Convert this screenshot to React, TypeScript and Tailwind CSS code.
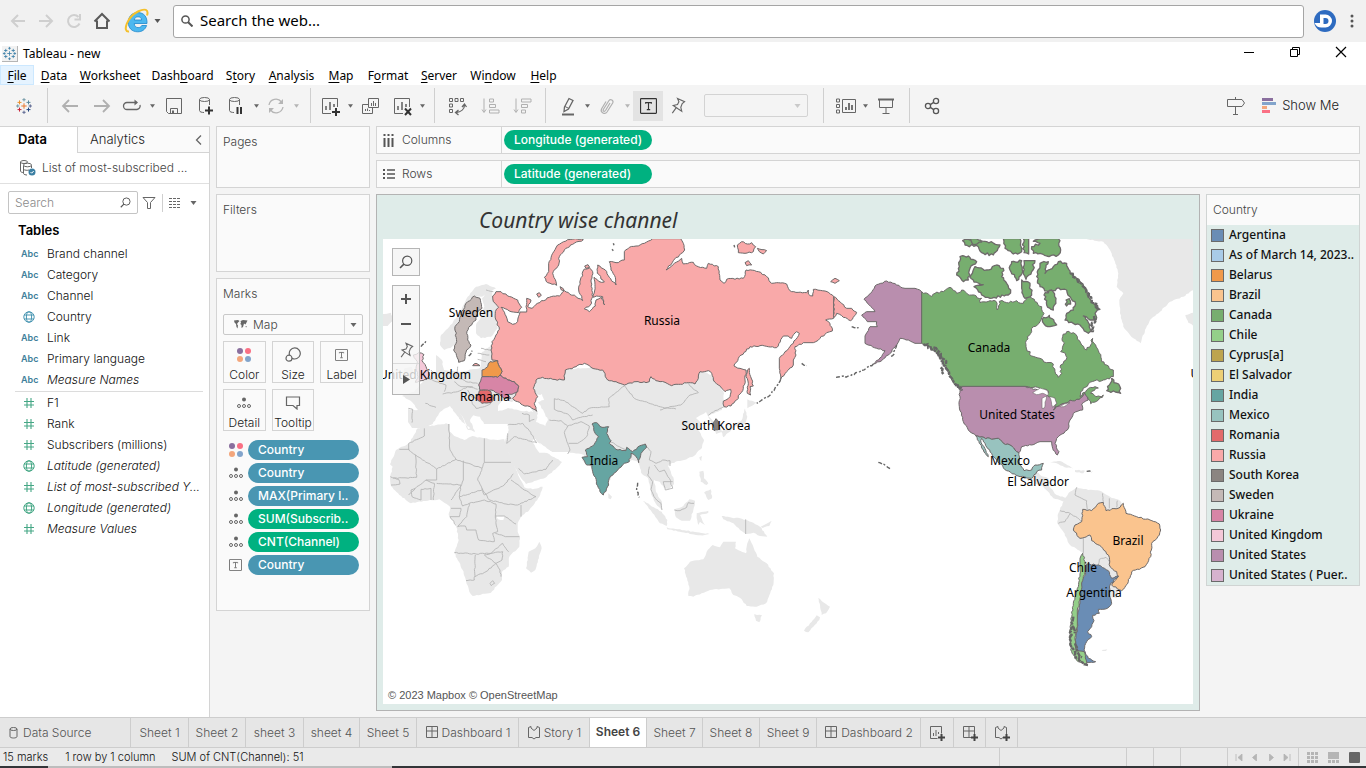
import React from "react";

const UI = "font-['Inter','Noto_Sans',sans-serif]";
const SYS = "font-['Noto_Sans','Open_Sans',sans-serif]";

/* ---------- map geometry ---------- */

type Frame = [number, number];
const EUROPE: Frame = [376, 190];
const SIBERIA: Frame = [660, 230];
const NORTH_AMERICA: Frame = [840, 230];
const AFRICA: Frame = [376, 400];
const PACIFIC: Frame = [640, 430];
const SOUTH_AMERICA: Frame = [1020, 470];

type Pt = [number, number];

/** Turns "x,y x,y" in third-of-a-pixel frame units into map units. */
function place(frame: Frame, list: string): Pt[] {
  return list
    .trim()
    .split(/\s+/)
    .map((p) => {
      const [x, y] = p.split(",").map(Number);
      return [frame[0] + x / 3, frame[1] + y / 3] as Pt;
    });
}

function noise(a: number, b: number) {
  const s = Math.sin(a * 12.9898 + b * 78.233) * 43758.5453;
  return s - Math.floor(s) - 0.5;
}

/** Breaks long edges into short ones with a small sideways offset, like a coast. */
function trace(pts: Pt[], rough: number, closed = true): string {
  const out: string[] = [];
  const n = pts.length;
  for (let i = 0; i < n; i++) {
    const a = pts[i];
    out.push(`${a[0].toFixed(2)},${a[1].toFixed(2)}`);
    if (!closed && i === n - 1) break;
    const b = pts[(i + 1) % n];
    const dx = b[0] - a[0];
    const dy = b[1] - a[1];
    const len = Math.hypot(dx, dy);
    if (rough === 0 || Math.abs(dx) < 0.01 || Math.abs(dy) < 0.01) continue;
    const swap = a[0] + a[1] > b[0] + b[1];
    const steps = Math.floor(len / 2);
    for (let k = 1; k < steps; k++) {
      const t = k / steps;
      const key = swap ? steps - k : k;
      const lo = swap ? b : a;
      const off = noise(lo[0] + key, lo[1] - key) * rough * (swap ? -1 : 1);
      const x = a[0] + dx * t - (dy / len) * off;
      const y = a[1] + dy * t + (dx / len) * off;
      out.push(`${x.toFixed(2)},${y.toFixed(2)}`);
    }
  }
  return `M${out.join("L")}${closed ? "Z" : ""}`;
}

const russia: Pt[] = [
  ...place(
    EUROPE,
    `830,146 805,160 780,168 760,172 745,185 745,210 720,218 700,215 705,240 718,262 720,285 700,262 688,240 665,225
     664,250 685,276 668,274 654,262 657,290 652,322 662,318 680,320 686,345 676,322 660,330 658,348 640,365 625,357 643,345 650,320 645,270 650,245 640,234 625,237 613,270
     608,300 620,332 600,320 565,302 550,318 520,322 480,343 468,355 455,350 465,330 452,325 450,350 452,366 432,366 425,395 410,403 395,395 390,378 375,352 405,365
     428,368 437,352 425,330 395,318 375,305 360,305 350,318 352,335 368,352 358,365 360,390 370,418 360,435 348,455
     345,480 348,510 365,512 370,530 378,545 372,555 395,570 415,575 428,590 425,605 410,625 440,645 462,650 482,664
     475,640 485,620 472,595 480,570 500,562 530,568 565,570 568,540 600,530 625,520 645,532 665,538 680,540 695,570
     720,575 745,585 780,575 810,578 820,575 825,560 840,572`
  ),
  ...place(
    SIBERIA,
    `0,455 15,457 35,467 55,463 85,458 105,462 115,445 120,425 145,422 155,430 160,450 185,475 195,485 212,478 210,500
     190,513 192,530 213,528 230,510 250,475 255,450 258,420 240,415 222,408 235,385 270,350 300,347 350,353 370,318
     385,318 395,325 410,305 418,310 400,340 375,365 358,385 358,415 362,448 380,425 400,405 400,390 408,375 405,350
     430,338 460,338 480,325 500,308 517,303 510,280 497,270 521,265 521,200 495,183 460,178 458,198 445,192 445,180 440,188
     395,185 385,175 380,162 350,158 335,160 320,140 295,125 258,120 250,145 200,148 192,160 180,150 175,110 145,100
     140,115 110,108 100,97 70,102 65,85 30,112 18,120 40,92 68,68 74,60 70,40 62,26`
  ),
];

interface Region {
  frame: Frame;
  color: string;
  shapes: string[];
}

const regions: Region[] = [
  {
    frame: EUROPE,
    color: "#f9a9a9",
    shapes: [
      "598,146 622,149 590,163 565,180 550,200 548,225 530,250 540,275 542,286 515,278 505,262 518,245 518,220 530,190 545,165 575,149",
      "290,527 300,520 312,527",
      "482,312 490,308 496,316 488,322",
      "552,290 562,296 564,302 556,300",
      "626,228 636,224 641,232 630,235",
    ],
  },
  {
    frame: SIBERIA,
    color: "#f9a9a9",
    shapes: [
      "521,200 540,215 560,235 575,235 590,247 572,272 550,262 530,250 522,262",
      "268,415 272,440 280,468 270,470 272,495 262,490 265,460 258,440 262,420",
      "232,45 245,35 262,42 275,38 287,50 280,65 255,70 235,68",
      "292,55 320,62 310,72 298,65",
      "255,98 265,92 275,105 260,107",
      "512,155 525,145 538,152 525,160",
    ],
  },
  { frame: EUROPE, color: "#f0994a", shapes: ["318,540 335,530 342,515 365,512 370,530 378,545 365,562 340,560 318,560"] },
  {
    frame: EUROPE,
    color: "#d785a6",
    shapes: ["318,560 340,560 365,562 372,555 395,570 415,575 428,590 425,605 395,615 405,625 385,625 365,610 345,600 335,602 310,598 308,585"],
  },
  { frame: EUROPE, color: "#e36a6b", shapes: ["310,602 335,600 345,605 352,625 345,638 318,640 300,625"] },
  {
    frame: EUROPE,
    color: "#c4b9b6",
    shapes: [
      "295,318 312,325 318,355 305,365 300,390 282,408 272,430 275,450 285,465 272,480 265,512 248,517 240,490 233,480 242,455 237,410 250,395 255,370 275,335",
    ],
  },
  { frame: EUROPE, color: "#f4c8d8", shapes: ["112,495 128,488 144,494 138,512 150,530 160,555 153,568 118,577 126,560 120,535 124,515"] },
  { frame: SIBERIA, color: "#86807d", shapes: ["160,578 168,566 176,576 179,596 162,602"] },
  {
    frame: AFRICA,
    color: "#66a5a2",
    shapes: [
      "648,72 662,68 678,82 698,80 692,100 705,122 700,130 720,148 750,152 752,142 770,155 790,138 808,132 812,142 795,160 788,188 780,170 765,160 760,185 745,190 725,210 700,235 698,255 682,285 672,275 650,215 648,195 632,195 618,172 635,170 628,150 650,138 668,110 655,95",
    ],
  },
  {
    frame: NORTH_AMERICA,
    color: "#b98eae",
    shapes: [
      "245,185 245,340 225,340 205,330 180,325 170,345 150,370 120,395 100,402 125,380 135,362 110,355 75,340 75,318 90,290 112,290 110,275 82,275 65,255 80,245 105,245 88,225 72,208 92,190 105,168 140,153 170,165 195,175 225,175",
      "358,474 365,469 555,469 580,478 622,488 645,505 650,520 640,540 660,525 690,510 718,508 735,487 745,510 725,522 728,540 700,550 690,570 682,600 650,625 645,640 657,665 652,675 638,655 635,635 600,635 575,645 545,650 537,668 525,660 510,645 490,640 475,625 455,628 408,618 385,600 370,575 358,530 360,500",
    ],
  },
  {
    frame: NORTH_AMERICA,
    color: "#77ae6f",
    shapes: [
      "245,185 275,200 285,190 310,185 330,172 350,190 365,180 395,195 425,205 420,218 450,212 468,214 472,240 478,214 500,218 530,212 550,220 560,205 570,190 585,215 605,230 612,250 600,275 580,290 575,305 562,320 558,350 575,378 600,385 620,398 640,402 645,425 655,442 665,430 662,405 678,390 676,370 662,365 670,345 668,320 680,305 700,308 712,320 725,345 740,360 752,345 758,325 762,340 775,362 785,395 800,405 820,420 820,440 790,450 765,452 745,462 722,485 720,500 740,480 765,470 775,474 752,490 768,500 790,495 770,514 752,521 745,508 735,490 718,508 690,510 660,525 640,540 650,520 645,505 625,500 622,480 600,475 565,470 555,469 365,469 355,474 335,450 325,425 310,400 300,380 285,365 270,350 245,340",
      "815,445 822,458 836,462 842,490 826,486 800,482 808,465",
      "360,80 385,78 410,95 400,104 390,115 385,150 370,155 350,135 358,110",
      "405,110 440,120 470,105 490,115 485,140 500,160 512,180 505,195 450,205 425,195 402,170 430,164 402,156 390,142",
      "515,95 545,92 548,125 530,152 510,120",
      "552,92 585,92 575,125 558,148 550,125",
      "600,100 625,95 615,130 640,110 655,95 680,100 690,130 710,145 740,180 745,200 780,238 765,250 768,270 750,270 730,258 760,305 745,310 720,285 700,280 675,270 680,250 700,240 705,215 690,200 680,180 650,175 625,190 600,170 590,140",
      "368,32 385,28 440,35 480,45 460,75 430,70 415,50 375,45",
      "385,26 410,26 425,36 405,44",
      "490,26 540,26 545,65 520,72 495,55",
      "550,26 566,26 566,72 552,68",
      "575,50 600,40 580,34 600,26 655,26 662,60 655,75 620,78 580,70",
      "612,195 635,180 648,205 640,240 620,225",
      "610,262 628,256 650,285 630,290 612,282",
      "545,150 570,160 575,195 555,205 545,175",
      "678,210 688,206 692,222 680,228",
    ],
  },
  {
    frame: NORTH_AMERICA,
    color: "#98c3bf",
    shapes: [
      "408,618 455,628 475,625 490,640 510,645 525,660 537,668 538,700 552,722 575,720 585,705 610,700 605,720 590,725 575,745 540,740 500,722 470,690 455,670 425,625 422,632 445,680 430,660 418,640",
    ],
  },
  {
    frame: SOUTH_AMERICA,
    color: "#fac48e",
    shapes: [
      "310,100 318,130 350,140 390,150 418,162 422,180 418,195 395,220 392,260 375,290 335,305 325,335 305,362 275,345 295,320 290,305 270,290 268,262 248,235 215,212 210,195 180,205 160,180 165,165 185,155 188,118 215,122 235,100 250,97 258,122 300,112",
    ],
  },
  {
    frame: SOUTH_AMERICA,
    color: "#6a8db5",
    shapes: [
      "200,282 235,285 265,302 275,325 295,318 270,345 268,375 275,400 262,415 235,418 238,430 218,436 222,452 215,470 203,485 215,500 200,515 192,540 205,565 227,575 200,577 190,560 168,535 165,510 172,480 170,440 180,400 180,350 192,320 200,300",
    ],
  },
  {
    frame: SOUTH_AMERICA,
    color: "#94cf89",
    shapes: [
      "188,250 195,275 195,300 185,345 180,390 172,420 172,470 165,510 168,540 192,545 200,583 175,575 155,545 148,500 155,440 160,400 175,350 180,300 180,265",
    ],
  },
];

const land: [Frame, string][] = [
  [
    [0, 0],
    `1446,1056 1500,1020 1680,1110 1860,1095 2100,1110 2145,1130 2172,1180 2166,1230 2124,1248 2142,1266 2154,1272 2166,1296 2148,1302
     2118,1236 2088,1254 2106,1272 2094,1290 2112,1320 2106,1344 2082,1368 2052,1380 2016,1389 2004,1398 2020,1432 2022,1452 2004,1470
     1992,1464 1980,1446 1962,1440 1968,1476 1986,1506 1986,1530 1968,1512 1956,1488 1950,1464 1944,1434 1926,1422 1914,1386
     1896,1380 1878,1386 1836,1428 1812,1482 1782,1428 1770,1398 1746,1380 1752,1365 1704,1356 1656,1356 1632,1344 1602,1314 1596,1326
     1618,1358 1640,1358 1686,1386 1674,1400 1635,1434 1578,1452 1563,1434 1542,1398 1524,1356 1512,1330 1524,1296 1527,1272 1488,1272
     1452,1272 1440,1250 1420,1246 1410,1260 1425,1296 1408,1290 1380,1238 1404,1290 1410,1284 1386,1266 1350,1218 1338,1224 1320,1236 1298,1272
     1272,1284 1236,1284 1224,1266 1224,1227 1254,1230 1236,1206 1206,1188 1242,1176 1272,1140 1308,1116 1308,1065 1326,1080 1332,1110
     1380,1116 1440,1104`,
  ],
  [EUROPE, "205,480 192,465 195,435 220,410 250,370 275,320 300,290 330,282 360,295 340,305 318,320 295,318 270,340 250,395 237,410 240,460 228,470"],
  [EUROPE, "318,325 345,295 352,330 365,355 358,370 365,415 345,440 315,445 300,430 300,405 318,375 325,350"],
  [EUROPE, "85,535 108,530 112,550 100,566 82,562"],
  [EUROPE, "20,372 45,368 52,388 35,408 20,408"],
  [
    AFRICA,
    "125,85 150,80 210,70 222,72 222,95 235,108 265,120 290,108 325,115 365,120 385,118 390,140 405,170 425,220 445,262 470,268 500,260 490,290 460,330 435,350 425,370 425,395 432,410 430,440 400,470 398,500 378,515 378,540 345,578 290,588 280,575 260,510 235,458 248,420 240,375 218,345 222,320 190,298 155,302 105,310 70,285 45,258 42,235 50,200 42,193 60,150 100,130",
  ],
  [AFRICA, "490,425 497,445 478,510 465,518 450,505 458,455 478,445"],
  [AFRICA, "697,280 708,290 704,298 697,295"],
  [PACIFIC, "8,212 30,225 65,245 82,270 80,288 60,280 35,245"],
  [PACIFIC, "80,292 120,298 165,306 215,312 180,316 120,305 82,298"],
  [PACIFIC, "103,238 130,228 148,208 165,212 160,240 150,272 125,272 108,262"],
  [PACIFIC, "170,250 205,242 205,248 180,255 195,285 180,275 175,285 170,265"],
  [PACIFIC, "178,125 190,122 192,145 205,160 200,165 182,155"],
  [PACIFIC, "192,188 212,178 216,205 205,210"],
  [PACIFIC, "178,82 186,78 184,94"],
  [PACIFIC, "245,258 270,262 300,265 340,278 360,290 382,320 360,318 340,308 318,312 300,300 280,280 250,268"],
  [PACIFIC, "362,290 385,278 395,272 388,288 368,294"],
  [
    PACIFIC,
    "328,325 340,350 352,380 380,400 402,430 400,465 378,520 350,530 320,528 305,508 290,498 280,495 268,475 210,480 160,500 145,498 148,470 132,415 150,395 190,388 200,365 218,345 240,352 250,335 288,335 285,355 318,370 322,340",
  ],
  [PACIFIC, "343,552 366,556 358,577 348,572"],
  [PACIFIC, "535,503 552,518 570,530 558,550 545,555 542,540"],
  [PACIFIC, "530,556 540,562 538,570 520,590 505,607 492,602 510,580"],
  [SIBERIA, "262,508 290,518 275,528 262,535"],
  [SIBERIA, "255,535 262,560 255,582 225,590 190,622 184,605 215,590 245,570"],
  [NORTH_AMERICA, "575,745 590,725 600,735 625,745 628,770 650,795 690,808 672,815 640,805 610,770 585,760"],
  [NORTH_AMERICA, "630,696 660,693 700,715 680,713 650,700"],
  [NORTH_AMERICA, "705,720 735,722 730,730 705,726"],
  [
    NORTH_AMERICA,
    "725,26 1060,26 1060,180 1030,200 990,215 960,245 930,270 915,300 902,340 880,325 850,290 840,250 838,210 850,190 830,170 835,130 825,95 810,60 790,35",
  ],
  [NORTH_AMERICA, "1036,255 1060,248 1060,288 1045,278"],
  [SOUTH_AMERICA, "130,95 150,65 170,52 205,60 240,62 270,80 300,92 320,130 300,300 290,385 268,380 200,290 190,250 150,225 130,185 112,160 115,130"],
  [SOUTH_AMERICA, "245,540 262,538 258,543 248,543"],
];

const water: [Frame, string][] = [
  [[0, 0], "1494,1218 1512,1196 1536,1206 1560,1196 1590,1220 1600,1236 1560,1232 1524,1224 1494,1234"],
  [[0, 0], "1596,1188 1626,1182 1632,1200 1614,1206 1632,1236 1644,1260 1636,1278 1608,1266 1614,1240"],
  [AFRICA, "488,128 508,140 536,162 528,166 505,156"],
  [AFRICA, "362,346 384,348 382,360 366,358"],
  [NORTH_AMERICA, "578,488 600,474 622,482 625,496 608,490 590,494"],
  [NORTH_AMERICA, "606,505 620,498 612,535 606,535"],
  [NORTH_AMERICA, "628,500 645,505 650,520 638,532 634,515"],
  [NORTH_AMERICA, "655,528 690,518 672,530"],
];

const borders: [Frame, string][] = [
  [AFRICA, "145,85 145,108 98,130 98,150 182,207 240,178 222,150 218,72"],
  [AFRICA, "325,115 325,187 405,187"],
  [AFRICA, "325,187 318,205 240,178"],
  [AFRICA, "118,165 122,232 52,235"],
  [AFRICA, "70,148 100,148"],
  [AFRICA, "182,207 182,240 150,240 118,265 98,285"],
  [AFRICA, "262,182 262,240 250,265 225,300"],
  [AFRICA, "318,205 305,240 318,265 325,285 385,255 412,222"],
  [AFRICA, "182,250 255,255 250,290 318,270"],
  [AFRICA, "318,265 340,300 390,312 425,315 480,290 445,270 405,240"],
  [AFRICA, "435,315 435,350"],
  [AFRICA, "250,290 260,318 280,310 325,300 360,312 358,348 385,348 420,372"],
  [AFRICA, "280,310 272,350 245,380 268,378 272,390 300,390 308,420 355,425 350,400 365,395 358,348"],
  [AFRICA, "240,376 222,350 250,350 255,325 225,325"],
  [AFRICA, "358,400 388,410 430,410"],
  [AFRICA, "235,458 300,462 345,460 380,430 398,455"],
  [AFRICA, "298,465 295,540 270,542"],
  [AFRICA, "297,530 330,515 360,490 378,480 380,455 345,460 325,465 360,490"],
  [AFRICA, "360,490 372,510 375,530"],
  [AFRICA, "342,550 350,542 356,550 346,557 342,550"],
  [AFRICA, "118,265 105,270 108,290 135,300 135,268 165,265 165,300"],
  [AFRICA, "172,300 175,250 150,240"],
  [AFRICA, "43,230 68,238 72,252 45,255"],
  [AFRICA, "395,75 440,70 460,92 482,128 415,110 392,130 395,100"],
  [AFRICA, "445,222 510,208 530,180"],
  [AFRICA, "445,222 428,205"],
  [AFRICA, "438,40 460,45 460,65 475,58"],
  [AFRICA, "520,60 555,62 575,78 565,98 575,130 582,150 575,162"],
  [AFRICA, "575,78 615,65 640,78 632,110 605,130 578,130"],
  [AFRICA, "535,28 535,-4 565,2 590,20 620,40 640,25 700,20 698,-5 745,-42"],
  [AFRICA, "535,28 575,42 590,60 620,50 650,45"],
  [AFRICA, "700,122 730,140 752,150"],
  [AFRICA, "745,-42 775,-5 860,22 900,27"],
  [AFRICA, "808,132 825,155 820,180 840,190 860,180 882,182 882,198"],
  [AFRICA, "820,200 815,225 830,245 825,268 838,295 855,310 858,330"],
  [AFRICA, "835,195 850,215 865,210 880,235 890,265 868,270 862,245 890,245"],
  [AFRICA, "97,25 110,28 108,68"],
  [AFRICA, "148,10 180,22"],
  [EUROPE, "155,565 180,575 210,585 205,605"],
  [EUROPE, "165,540 180,555 185,570"],
  [EUROPE, "245,530 240,560 270,575 305,580"],
  [EUROPE, "200,612 245,605 275,590 305,598"],
  [EUROPE, "235,575 255,590 290,590"],
  [EUROPE, "275,600 285,620 305,625"],
  [EUROPE, "280,625 300,655 325,650 345,640"],
  [EUROPE, "305,490 340,495"],
  [EUROPE, "305,508 330,515"],
  [EUROPE, "315,475 345,480"],
  [EUROPE, "330,300 352,305"],
  [SIBERIA, "0,540 30,530 62,525 90,495 115,488 90,468 85,460"],
  [SIBERIA, "192,530 165,542 145,556"],
  [PACIFIC, "103,240 120,242 140,232 145,218 162,220"],
  [PACIFIC, "317,268 317,312"],
  [SOUTH_AMERICA, "170,52 165,75 185,85 200,92 202,118"],
  [SOUTH_AMERICA, "248,70 250,95"],
  [SOUTH_AMERICA, "268,85 268,115"],
  [SOUTH_AMERICA, "292,92 290,112"],
  [SOUTH_AMERICA, "120,122 150,130 188,155"],
  [SOUTH_AMERICA, "115,160 135,155 150,132"],
  [SOUTH_AMERICA, "190,205 190,250"],
  [SOUTH_AMERICA, "235,285 238,268 258,262 268,275"],
];

const darkIslands: [Frame, string][] = [
  [SIBERIA, "362,448 345,475 325,500 290,520"],
  [NORTH_AMERICA, "100,402 60,425 30,438 -12,442"],
  [NORTH_AMERICA, "115,697 132,703 150,716"],
  [NORTH_AMERICA, "170,345 162,372 152,380"],
  [NORTH_AMERICA, "740,724 756,726"],
  [NORTH_AMERICA, "35,290 56,293"],
  [SIBERIA, "425,400 440,407"],
  [SIBERIA, "222,45 224,52"],
  [AFRICA, "785,248 782,265 790,292"],
  [EUROPE, "135,470 150,452"],
  [EUROPE, "278,498 288,482"],
  [EUROPE, "712,160 714,166"],
  [EUROPE, "708,178 712,182"],
];

const thickCoasts: [Frame, string][] = [
  [NORTH_AMERICA, "250,342 272,352 290,368 304,392 318,415 330,440 345,462 362,478"],
  [NORTH_AMERICA, "280,352 298,366 312,388 318,402"],
  [NORTH_AMERICA, "302,412 310,432"],
  [NORTH_AMERICA, "345,465 366,482"],
  [NORTH_AMERICA, "690,130 712,148 738,178 746,200 778,238"],
  [NORTH_AMERICA, "762,258 768,272 754,286 760,305"],
  [SOUTH_AMERICA, "160,440 158,470 151,500 154,530 165,555 182,575 204,585"],
  [SOUTH_AMERICA, "160,470 164,490"],
  [SOUTH_AMERICA, "165,520 172,545 186,562"],
];

const labels: [string, number, number][] = [
  ["Sweden", 471, 317],
  ["Russia", 662, 325],
  ["United Kingdom", 425, 379],
  ["Romania", 485, 401],
  ["South Korea", 716, 430],
  ["India", 604, 465],
  ["Canada", 989, 352],
  ["United States", 1017, 419],
  ["Mexico", 1010, 465],
  ["El Salvador", 1038, 486],
  ["Brazil", 1128, 545],
  ["Chile", 1083, 572],
  ["Argentina", 1094, 597],
];

function WorldMap() {
  return (
    <svg viewBox="383 239 810 465" preserveAspectRatio="xMidYMid slice" className="block h-full w-full bg-white" role="img" aria-label="Country wise channel map">
      <g fill="#e8e8e8">
        {land.map(([f, s], i) => (
          <path key={i} d={trace(place(f, s), 1)} />
        ))}
      </g>
      <g fill="#fff">
        {water.slice(0, 4).map(([f, s], i) => (
          <path key={i} d={trace(place(f, s), 1)} />
        ))}
      </g>
      <g fill="none" stroke="#b5b5b5" strokeWidth="0.9">
        {borders.map(([f, s], i) => (
          <path key={i} d={trace(place(f, s), 1, false)} />
        ))}
      </g>
      <g stroke="#6e6a6a" strokeWidth="1" strokeLinejoin="round">
        <path d={trace(russia, 1.5)} fill="#f9a9a9" />
        {regions.map((r) =>
          r.shapes.map((s, i) => (
            <path
              key={r.color + i}
              d={trace(place(r.frame, s), r.color === "#77ae6f" ? 2.6 : 1.4)}
              fill={r.color}
              strokeWidth={r.color === "#77ae6f" && i > 0 ? 1.3 : 1}
            />
          ))
        )}
      </g>
      <g fill="#fff" stroke="#6e6a6a" strokeWidth="0.6">
        {water.slice(4).map(([f, s], i) => (
          <path key={i} d={trace(place(f, s), 1)} />
        ))}
      </g>
      <g fill="none" stroke="#666" strokeWidth="1.4" strokeDasharray="4 1.5 2 2">
        {darkIslands.map(([f, s], i) => (
          <path key={i} d={trace(place(f, s), 1.6, false)} />
        ))}
      </g>
      <g fill="none" stroke="#666" strokeWidth="2.4" strokeDasharray="5 0.6 3 1">
        {thickCoasts.map(([f, s], i) => (
          <path key={i} d={trace(place(f, s), 3, false)} />
        ))}
      </g>
      <g className="fill-black text-[12px] font-normal" textAnchor="middle" fontFamily="'Noto Sans', sans-serif">
        {labels.map(([t, x, y]) => (
          <text key={t} x={x} y={y}>
            {t}
          </text>
        ))}
        <text x="1195" y="378">
          U
        </text>
      </g>
    </svg>
  );
}

/* ---------- icons ---------- */

function Ico({ w = 20, h = 20, c = "#666", sw = 1, children }: { w?: number; h?: number; c?: string; sw?: number; children: React.ReactNode }) {
  return (
    <svg width={w} height={h} viewBox={`0 0 ${w} ${h}`} fill="none" stroke={c} strokeWidth={sw} className="shrink-0" aria-hidden="true">
      {children}
    </svg>
  );
}

function Caret({ c = "#666", w = 6 }: { c?: string; w?: number }) {
  return (
    <svg width={w} height="4" viewBox="0 0 6 4" className="shrink-0" aria-hidden="true">
      <path d="M0 0H6L3 4Z" fill={c} />
    </svg>
  );
}

const tableauPluses: [number, number, number, string, string][] = [
  [10, 10, 3, "#e8762d", "#3c7fa8"],
  [5, 6, 2.2, "#eb912c", "#3c7fa8"],
  [15, 6, 2.2, "#59879b", "#3c7fa8"],
  [5, 14, 2.2, "#c72037", "#3c7fa8"],
  [15, 14, 2.2, "#1f447e", "#3c7fa8"],
  [10, 3, 1.8, "#7199a6", "#3c7fa8"],
  [10, 17, 1.8, "#5b6591", "#3c7fa8"],
  [3, 10, 1.8, "#7199a6", "#3c7fa8"],
  [17, 10, 1.8, "#5b6591", "#3c7fa8"],
];

function TableauLogo({ mono = false, size = 20 }: { mono?: boolean; size?: number }) {
  return (
    <svg width={size} height={size} viewBox="0 0 20 20" aria-hidden="true" className="shrink-0">
      {tableauPluses.map(([x, y, r, c, m], i) => (
        <path key={i} d={`M${x - r} ${y}H${x + r}M${x} ${y - r}V${y + r}`} stroke={mono ? m : c} strokeWidth="1.1" />
      ))}
    </svg>
  );
}

const Arrow = ({ flip = false, c = "#b0b0b0" }: { flip?: boolean; c?: string }) => (
  <Ico c={c} sw={1.8}>
    <path d={flip ? "M2 10H17M11 4L17 10L11 16" : "M18 10H3M9 4L3 10L9 16"} />
  </Ico>
);

const Database = ({ pause = false }: { pause?: boolean }) => (
  <Ico>
    <ellipse cx="8.500" cy="3.500" rx="5" ry="2" />
    <path d="M3.500 3.500V14.500C3.500 16 6 16.500 8 16.500M13.500 3.500V9" />
    {pause ? <path d="M11.500 11V18M15 11V18" stroke="#333" strokeWidth="2" /> : <path d="M9 14.500H17M13 10.500V18.500" stroke="#333" strokeWidth="2" />}
  </Ico>
);

const SheetIcon = ({ mark }: { mark: "plus" | "cross" }) => (
  <Ico>
    <path d="M11 17.500H2.500V2.500H17.500V11" />
    <path d="M6 10V14M10 6V14M14 8V11" strokeWidth="1.600" />
    {mark === "plus" ? <path d="M12 16H20M16 12V20" stroke="#333" strokeWidth="2" /> : <path d="M13 12.500L19 19M19 12.500L13 19" stroke="#333" strokeWidth="2" />}
  </Ico>
);

const TextIcon = ({ size = 15, c = "#666" }: { size?: number; c?: string }) => (
  <svg width={size} height={size - 1} viewBox="0 0 15 14" fill="none" stroke={c} aria-hidden="true" className="shrink-0">
    <rect x="0.500" y="0.500" width="14" height="13" rx="0.500" />
    <path d="M5 5V4H10V5M7.500 4V10M6 10.200H9" />
  </svg>
);

const Pin = ({ s = 18 }: { s?: number }) => (
  <svg width={s} height={s} viewBox="0 0 18 18" fill="none" stroke="#666" strokeWidth="1.200" aria-hidden="true">
    <path d="M9 1.500L16.500 5L14 7L12.500 11L13.500 15L9.500 12.500L4.500 9L9 8L10.500 5ZM7.500 11.500L3.500 17" />
  </svg>
);

const Detail = () => (
  <svg width="16" height="12" viewBox="0 0 16 12" fill="none" stroke="#666" aria-hidden="true">
    <circle cx="8" cy="2.500" r="2" fill="#666" stroke="none" />
    <circle cx="3" cy="9" r="1.500" />
    <circle cx="8" cy="9" r="1.500" />
    <circle cx="13" cy="9" r="1.500" />
  </svg>
);

const ColorDots = () => (
  <svg width="16" height="16" viewBox="0 0 16 16" aria-hidden="true">
    <circle cx="4" cy="4" r="3" fill="#8a6f9e" />
    <circle cx="12" cy="4" r="3" fill="#fa7084" />
    <circle cx="4" cy="12" r="3" fill="#f3a67c" />
    <circle cx="12" cy="12" r="3" fill="#82a4cb" />
  </svg>
);

const Globe = ({ c }: { c: string }) => (
  <svg width="12" height="12" viewBox="0 0 12 12" fill="none" stroke={c} aria-hidden="true">
    <circle cx="6" cy="6" r="5.200" />
    <ellipse cx="6" cy="6" rx="2.600" ry="5.200" />
    <path d="M1 4H11M1 8H11" />
  </svg>
);

const Hash = () => (
  <svg width="12" height="12" viewBox="0 0 12 12" fill="none" stroke="#45a785" strokeWidth="1.100" aria-hidden="true">
    <path d="M4 1V11M8 1V11M1 4.500H11M1 8H11" />
  </svg>
);

const Magnifier = ({ s = 14, c = "#555" }: { s?: number; c?: string }) => (
  <svg width={s} height={s} viewBox="0 0 14 14" fill="none" stroke={c} strokeWidth="1.200" aria-hidden="true" className="shrink-0">
    <circle cx="8.200" cy="5.800" r="4.600" />
    <path d="M4.900 9.100L1 13" strokeWidth="1.500" />
  </svg>
);

const DashIcon = ({ plus = false }: { plus?: boolean }) => (
  <Ico w={16} h={16}>
    <path d="M1.500 1.500H12.500V12.500H1.500ZM7 1.500V12.500M1.500 6H12.500" />
    {plus && <path d="M9 12.500H16M12.500 9V16" stroke="#444" strokeWidth="2" />}
  </Ico>
);

const StoryIcon = ({ plus = false }: { plus?: boolean }) => (
  <Ico w={16} h={16}>
    <path d="M7 5.500L4 3V1.500L1.500 2.500V12.500H5L7 14L9 12.500H12.500V2.500L10 1.500V3L7 5.500" />
    {plus && <path d="M9 12.500H16M12.500 9V16" stroke="#444" strokeWidth="2" />}
  </Ico>
);

function Tool({ w, label, children, active = false }: { w: string; label: string; children: React.ReactNode; active?: boolean }) {
  return (
    <button type="button" aria-label={label} className={`flex h-[30px] shrink-0 items-center justify-center ${w} ${active ? "bg-[#e3e3e3]" : ""}`}>
      {children}
    </button>
  );
}

const Sep = () => <span className="h-[35px] w-px shrink-0 bg-[#cfcfcf]" />;

/* ---------- page parts ---------- */

function BrowserBar() {
  return (
    <div className="flex h-[42px] shrink-0 items-center bg-[#f1f1f1] pr-3 pl-2">
      <button type="button" aria-label="Back" className="flex w-5 justify-center">
        <Ico w={18} h={18} c="#cfcfcf" sw={2}>
          <path d="M16 9H3M9 3L3 9L9 15" />
        </Ico>
      </button>
      <button type="button" aria-label="Forward" className="ml-2 flex w-5 justify-center">
        <Ico w={18} h={18} c="#cfcfcf" sw={2}>
          <path d="M2 9H15M9 3L15 9L9 15" />
        </Ico>
      </button>
      <button type="button" aria-label="Reload" className="ml-2 flex w-5 justify-center">
        <Ico w={18} h={18} c="#cfcfcf" sw={2}>
          <path d="M14.500 11.500A6 6 0 1 1 13.500 5M15 2V7.500H9.500" />
        </Ico>
      </button>
      <button type="button" aria-label="Home" className="ml-2 flex w-5 justify-center">
        <Ico w={18} h={18} c="#5a5a5a" sw={2}>
          <path d="M4 8.500V16H14V8.500M1.500 9.500L9 2L16.500 9.500" />
        </Ico>
      </button>
      <button type="button" aria-label="Search engine" className="ml-3 flex h-[30px] w-[37px] items-center justify-center gap-1">
        <svg width="26" height="26" viewBox="0 0 26 26" fill="none" aria-hidden="true" className="shrink-0">
          <path
            fillRule="evenodd"
            d="M23 15.500H10.200C10.400 18.500 12.200 19.600 14.200 19.600C16 19.600 17.200 18.800 17.800 17.500H22.600C21.300 21.600 18 23.800 13.800 23.800C7.800 23.800 4.300 20 4.300 14.300C4.300 8.600 8 4.600 13.800 4.600C20 4.600 23.300 8.800 23 15.500ZM10.300 12H17.600C17.400 9.800 16 8.800 14 8.800C12 8.800 10.600 9.900 10.300 12Z"
            fill="#4db8ef"
            stroke="#1d87cb"
            strokeWidth="0.800"
          />
          <path d="M5 23.500C-2 24.500 3 9 14 3.500C21 0 25 1.500 23 7.500" stroke="#f4c02c" strokeWidth="2" />
        </svg>
        <Caret c="#555" w={7} />
      </button>
      <div className="ml-3 flex h-[33px] min-w-0 flex-1 items-center gap-[7px] rounded-[3px] border border-[#a5a5a5] bg-white px-[7px]">
        <svg width="12" height="12" viewBox="0 0 12 12" fill="none" stroke="#555" strokeWidth="1.500" aria-hidden="true" className="shrink-0">
          <circle cx="4.500" cy="4.500" r="3.600" />
          <path d="M7.200 7.200L11.500 11.500" strokeWidth="2" />
        </svg>
        <input
          aria-label="Search the web"
          placeholder="Search the web..."
          className={`h-full min-w-0 flex-1 bg-transparent pb-[2px] text-[15px] font-normal text-black outline-none placeholder:text-black ${SYS}`}
        />
      </div>
      <button type="button" aria-label="Profile" className="ml-[10px]">
        <svg width="22" height="22" viewBox="0 0 22 22" aria-hidden="true">
          <circle cx="11" cy="11" r="11" fill="#2e6bc0" />
          <path d="M6 4.500H11.500A6.500 6.500 0 0 1 11.500 17.500H7.500C4 17.500 2 16 0.500 13H6Z" fill="#fff" />
          <path d="M9.500 8H11.500A3 3 0 0 1 11.500 14H9.500Z" fill="#2e6bc0" />
        </svg>
      </button>
      <button type="button" aria-label="More" className="ml-[14px]">
        <svg width="4" height="14" viewBox="0 0 4 14" fill="#555" aria-hidden="true">
          <circle cx="2" cy="2" r="1.500" />
          <circle cx="2" cy="7" r="1.500" />
          <circle cx="2" cy="12" r="1.500" />
        </svg>
      </button>
    </div>
  );
}

function TitleBar() {
  return (
    <div className={`flex h-[23px] shrink-0 items-center bg-white pr-[19px] pl-[2px] text-[12px] font-normal text-black ${SYS}`}>
      <span className="flex h-4 w-4 items-center border-r border-b border-[#b5b5b5] bg-[#f2f2f2]">
        <TableauLogo mono size={15} />
      </span>
      <h1 className="ml-[5px] flex-1">Tableau - new</h1>
      <div className="flex gap-[34px] pb-1">
        <button type="button" aria-label="Minimize">
          <Ico w={12} h={12} c="#000">
            <path d="M1 6.500H11" />
          </Ico>
        </button>
        <button type="button" aria-label="Restore">
          <Ico w={12} h={12} c="#000">
            <path d="M1.500 3.500H8.500V10.500H1.500ZM3.500 3.500V1.500H10.500V8.500H8.500" />
          </Ico>
        </button>
        <button type="button" aria-label="Close">
          <Ico w={12} h={12} c="#000">
            <path d="M1 1L11 11M11 1L1 11" strokeWidth="1.200" />
          </Ico>
        </button>
      </div>
    </div>
  );
}

const menus: [string, string, string, string][] = [
  ["", "F", "ile", "w-[34px]"],
  ["", "D", "ata", "w-[40px]"],
  ["", "W", "orksheet", "w-[72px]"],
  ["Dash", "b", "oard", "w-[73px]"],
  ["S", "t", "ory", "w-[43px]"],
  ["", "A", "nalysis", "w-[59px]"],
  ["", "M", "ap", "w-[40px]"],
  ["F", "o", "rmat", "w-[54px]"],
  ["", "S", "erver", "w-[48px]"],
  ["Wi", "n", "dow", "w-[60px]"],
  ["", "H", "elp", "w-[41px]"],
];

function MenuBar() {
  return (
    <nav className={`flex h-[20px] shrink-0 bg-white text-[12px] font-normal text-black ${SYS}`}>
      {menus.map(([a, u, b, w], i) => (
        <button key={i} type="button" className={`flex items-center justify-center pt-[2px] whitespace-pre ${w} ${i === 0 ? "border border-[#cce8ff] bg-[#e5f3ff]" : ""}`}>
          <span>
            {a}
            <span className="underline underline-offset-2">{u}</span>
            {b}
          </span>
        </button>
      ))}
    </nav>
  );
}

function Toolbar() {
  return (
    <div className="flex h-[41px] shrink-0 items-center bg-[#f4f4f4]">
      <Tool w="w-[47px]" label="Start page">
        <TableauLogo size={18} />
      </Tool>
      <Sep />
      <Tool w="ml-1.5 w-8" label="Undo">
        <Arrow />
      </Tool>
      <Tool w="w-8" label="Redo">
        <Arrow flip />
      </Tool>
      <Tool w="w-7" label="Replay">
        <Ico sw={1.300}>
          <path d="M15 6.500H5A3.500 3.500 0 0 0 5 13.500H15A3.500 3.500 0 0 0 18 9" />
          <path d="M12.500 3.500L16 6.500L12.500 9.500Z" fill="#666" stroke="none" />
        </Ico>
      </Tool>
      <Tool w="w-3" label="Replay options">
        <Caret w={5} />
      </Tool>
      <Tool w="w-8" label="Save">
        <Ico>
          <path d="M2.500 2.500H17.500V17.500H4.500L2.500 15.500ZM6.500 17.500V12.500H13.500V17.500" />
          <path d="M9 14.500V17" strokeWidth="2" />
        </Ico>
      </Tool>
      <Tool w="w-[31px]" label="New data source">
        <Database />
      </Tool>
      <Tool w="w-[30px]" label="Pause auto updates">
        <Database pause />
      </Tool>
      <Tool w="w-[11px]" label="Pause options">
        <Caret w={5} />
      </Tool>
      <Tool w="w-7" label="Refresh">
        <Ico c="#b5b5b5" sw={1.300}>
          <path d="M3 9A7 7 0 0 1 15.500 6M17 11A7 7 0 0 1 4.500 14" />
          <path d="M17 3V8H12ZM3 17V12H8Z" fill="#b5b5b5" stroke="none" />
        </Ico>
      </Tool>
      <Tool w="mr-2 w-3" label="Refresh options">
        <Caret c="#b5b5b5" w={5} />
      </Tool>
      <Sep />
      <Tool w="ml-[5px] w-7" label="New worksheet">
        <SheetIcon mark="plus" />
      </Tool>
      <Tool w="w-3" label="New worksheet options">
        <Caret w={5} />
      </Tool>
      <Tool w="w-[29px]" label="Duplicate">
        <Ico>
          <path d="M7.500 2.500H17.500V11.500H7.500ZM7 8.500H1.500V17.500H11.500V12" />
          <path d="M10.500 7V10M12.500 5V10M14.500 7V10M4.500 13V15M6.500 12.500V15M8.500 14V15" />
        </Ico>
      </Tool>
      <Tool w="ml-[3px] w-7" label="Clear sheet">
        <SheetIcon mark="cross" />
      </Tool>
      <Tool w="mr-1.5 w-3" label="Clear options">
        <Caret w={5} />
      </Tool>
      <Sep />
      <Tool w="ml-[7px] w-8" label="Swap rows and columns">
        <Ico>
          <path d="M1.500 2.500H4.500V5.500H1.500ZM7 2.500H10V5.500H7ZM12.500 2.500H15.500V5.500H12.500ZM1.500 8H4.500V11H1.500ZM1.500 13.500H4.500V16.500H1.500Z" />
          <path d="M16.500 9C16.500 13 13 16 8 16.500M14 11L16.500 8L18.500 11M10.500 14L7.500 16.500L10.500 19" strokeWidth="1.300" />
        </Ico>
      </Tool>
      <Tool w="w-8" label="Sort ascending">
        <Ico c="#b0b0b0">
          <path d="M4 2.500V16M2 13.500L4 16.500L6 13.500M9.500 3H13.500V6H9.500ZM9.500 8.500H15.500V11.500H9.500ZM9.500 14H19V17H9.500Z" />
        </Ico>
      </Tool>
      <Tool w="mr-[7px] w-8" label="Sort descending">
        <Ico c="#b0b0b0">
          <path d="M4 2.500V16M2 13.500L4 16.500L6 13.500M9.500 3H19V6H9.500ZM9.500 8.500H15.500V11.500H9.500ZM9.500 14H13.500V17H9.500Z" />
        </Ico>
      </Tool>
      <Sep />
      <Tool w="ml-2 w-7" label="Highlight">
        <Ico>
          <path d="M6.500 11L11 2.500L15 4.500L10.500 13L6 15.500Z" strokeWidth="1.300" />
          <path d="M7 10.500L11 12.500" />
          <path d="M4 18.500H16" strokeWidth="2" />
        </Ico>
      </Tool>
      <Tool w="w-[11px]" label="Highlight options">
        <Caret w={5} />
      </Tool>
      <Tool w="w-7" label="Group members">
        <Ico c="#b0b0b0" sw={1.200}>
          <path d="M13 7L8.500 14.500C7.500 16 5.500 15 6.300 13.500L12 4.500C13.500 2.500 17 4.500 15.700 7L10 16C8 19 3 16.500 4.500 13L9 5.500" />
        </Ico>
      </Tool>
      <Tool w="w-3" label="Group options">
        <Caret c="#b5b5b5" w={5} />
      </Tool>
      <Tool w="w-[30px]" label="Show mark labels" active>
        <TextIcon size={17} c="#333" />
      </Tool>
      <Tool w="w-[29px]" label="Fix axes">
        <Pin s={17} />
      </Tool>
      <div className="relative ml-3 flex h-[23px] w-[104px] shrink-0 items-center rounded-[2px] border border-[#d3d3d3]">
        <select disabled aria-label="Fit" className="h-full w-full appearance-none bg-transparent" />
        <span className="pointer-events-none absolute right-[6px]">
          <Caret c="#c9c9c9" w={7} />
        </span>
      </div>
      <span className="w-[15px] shrink-0" />
      <Sep />
      <Tool w="ml-2 w-7" label="Show or hide cards">
        <Ico w={22}>
          <path d="M1.500 3H4.500V6H1.500ZM1.500 8.500H4.500V11.500H1.500ZM1.500 14H4.500V17H1.500ZM7.500 3.500H20.500V16.500H7.500Z" />
          <path d="M11 11V14M14 7V14M17 9V14" strokeWidth="1.800" />
        </Ico>
      </Tool>
      <Tool w="w-[11px]" label="Card options">
        <Caret w={5} />
      </Tool>
      <Tool w="mr-[9px] w-[29px]" label="Presentation mode">
        <Ico>
          <path d="M3.500 4V11.500H16.500V4M10 12V17M6.500 17.500H13.500" />
          <path d="M2 3.500H18" strokeWidth="2" />
        </Ico>
      </Tool>
      <Sep />
      <Tool w="ml-2 w-7" label="Share">
        <Ico w={16} h={18} c="#555" sw={1.300}>
          <circle cx="4" cy="9" r="2.600" />
          <circle cx="12" cy="4" r="2.600" />
          <circle cx="12" cy="14" r="2.600" />
          <path d="M6.300 7.600L9.700 5.400M6.300 10.400L9.700 12.600" />
        </Ico>
      </Tool>
      <span className="flex-1" />
      <Tool w="w-7" label="Guide">
        <Ico>
          <path d="M1.500 3.500H16L18.500 7L16 10.500H1.500ZM9.500 1V3.500M9.500 10.500V18M7 18.500H12" />
        </Ico>
      </Tool>
      <button type="button" className={`mr-[27px] ml-3 flex items-center gap-[5px] text-[13px] text-[#222] ${UI}`}>
        <svg width="15" height="16" viewBox="0 0 15 16" aria-hidden="true">
          <path d="M0 0H11V3H0Z" fill="#8a6f9e" />
          <path d="M0 4H14V7H0Z" fill="#82a4cb" />
          <path d="M0 8H5V11H0Z" fill="#f3a67c" />
          <path d="M0 12H8V15H0Z" fill="#fa7084" />
        </svg>
        Show Me
      </button>
    </div>
  );
}

type Kind = "abc" | "geo" | "geoGreen" | "num";
interface Field {
  name: string;
  kind: Kind;
  italic?: boolean;
}

const dimensions: Field[] = [
  { name: "Brand channel", kind: "abc" },
  { name: "Category", kind: "abc" },
  { name: "Channel", kind: "abc" },
  { name: "Country", kind: "geo" },
  { name: "Link", kind: "abc" },
  { name: "Primary language", kind: "abc" },
  { name: "Measure Names", kind: "abc", italic: true },
];

const measures: Field[] = [
  { name: "F1", kind: "num" },
  { name: "Rank", kind: "num" },
  { name: "Subscribers (millions)", kind: "num" },
  { name: "Latitude (generated)", kind: "geoGreen", italic: true },
  { name: "List of most-subscribed Y...", kind: "num", italic: true },
  { name: "Longitude (generated)", kind: "geoGreen", italic: true },
  { name: "Measure Values", kind: "num", italic: true },
];

function FieldList({ fields }: { fields: Field[] }) {
  return (
    <ul>
      {fields.map((f) => (
        <li key={f.name} className="flex h-[21px] items-center pl-[18px] text-[12px] text-[#111]">
          <span className="flex w-[29px] shrink-0 justify-start">
            {f.kind === "abc" && <span className="pl-[3px] text-[9px] font-semibold text-[#3f7f9b]">Abc</span>}
            {f.kind === "geo" && (
              <span className="pl-[5px]">
                <Globe c="#4996b2" />
              </span>
            )}
            {f.kind === "geoGreen" && (
              <span className="pl-[5px]">
                <Globe c="#45a785" />
              </span>
            )}
            {f.kind === "num" && (
              <span className="pl-[5px]">
                <Hash />
              </span>
            )}
          </span>
          <span className={`whitespace-nowrap ${f.italic ? "italic" : ""}`}>{f.name}</span>
        </li>
      ))}
    </ul>
  );
}

function DataPane() {
  return (
    <aside className="flex w-[210px] shrink-0 flex-col border-t border-r border-[#d4d4d4] bg-white">
      <div className="flex h-[26px] shrink-0 text-[13px]">
        <button type="button" className="w-[77px] pr-3 font-semibold text-black">
          Data
        </button>
        <div className="flex flex-1 items-center justify-between border-b border-l border-[#d4d4d4] bg-[#fafafa] pr-[7px] pl-3 text-[#222]">
          <button type="button">Analytics</button>
          <button type="button" aria-label="Collapse pane">
            <Ico w={7} h={10} sw={1.300}>
              <path d="M6 0.500L1.500 5L6 9.500" />
            </Ico>
          </button>
        </div>
      </div>
      <div className="flex h-[31px] shrink-0 items-center gap-1 border-b border-[#e0e0e0] pl-[18px] text-[12px] text-[#444]">
        <Ico w={20} h={18}>
          <ellipse cx="6" cy="3" rx="3.500" ry="1.500" />
          <path d="M2.500 3V12C2.500 13 4 13.500 5 13.500M5.500 6.500V14.500C5.500 15.500 8 16 9 16M13.500 6.500V9" />
          <ellipse cx="9.500" cy="6" rx="4" ry="1.800" />
          <path d="M5.500 10C6 11.500 10 11.500 11 11" />
          <circle cx="14" cy="13" r="3.500" fill="#3b7fa3" stroke="none" />
          <path d="M12.500 13L13.700 14.200L15.700 12" stroke="#fff" />
        </Ico>
        <span className="whitespace-nowrap">List of most-subscribed ...</span>
      </div>
      <div className="mt-[7px] flex h-[23px] shrink-0 items-center pl-2">
        <div className="flex h-full w-[130px] items-center rounded-[2px] border border-[#c4c4c4] px-1.5">
          <input aria-label="Search fields" placeholder="Search" className="h-full w-full min-w-0 bg-transparent text-[12px] outline-none placeholder:text-[#8a8a8a]" />
          <Magnifier s={11} />
        </div>
        <button type="button" aria-label="Filter" className="ml-1 flex">
          <Ico w={14} h={13}>
            <path d="M1 1.500H13L8.500 6.500V12.500H5.500V6.500Z" />
          </Ico>
        </button>
        <span className="mx-[6px] h-[18px] w-px bg-[#cfcfcf]" />
        <button type="button" aria-label="View as" className="flex items-center gap-[9px]">
          <Ico w={12} h={10}>
            <path d="M0 0.500H12M0 3.500H12M0 6.500H12M0 9.500H12" strokeDasharray="3 1" />
          </Ico>
          <Caret w={7} />
        </button>
      </div>
      <h2 className="mt-[5px] mb-[2px] pl-[18px] text-[13px] leading-[22px] font-semibold text-black">Tables</h2>
      <FieldList fields={dimensions} />
      <hr className="mt-px mr-[6px] ml-[15px] border-[#dcdcdc]" />
      <FieldList fields={measures} />
    </aside>
  );
}

const cardBox = "border border-[#d4d4d4] bg-[#fafafa]";

const markButtons: { label: string; icon: React.ReactNode }[] = [
  { label: "Color", icon: <ColorDots /> },
  {
    label: "Size",
    icon: (
      <svg width="16" height="16" viewBox="0 0 16 16" fill="none" stroke="#666" aria-hidden="true">
        <path d="M4.500 8A5.500 5.500 0 1 1 7 11.200" strokeWidth="1.200" />
        <circle cx="4" cy="11.200" r="3" strokeWidth="1.200" />
      </svg>
    ),
  },
  { label: "Label", icon: <TextIcon size={13} /> },
  { label: "Detail", icon: <Detail /> },
  {
    label: "Tooltip",
    icon: (
      <svg width="16" height="14" viewBox="0 0 16 14" fill="none" stroke="#666" strokeWidth="1.200" aria-hidden="true">
        <path d="M1.500 1H14.500V9.500H12V13L8 9.500H1.500Z" />
      </svg>
    ),
  },
];

const pills: { text: string; green?: boolean; icon: "color" | "detail" | "text" }[] = [
  { text: "Country", icon: "color" },
  { text: "Country", icon: "detail" },
  { text: "MAX(Primary l..", icon: "detail" },
  { text: "SUM(Subscrib..", icon: "detail", green: true },
  { text: "CNT(Channel)", icon: "detail", green: true },
  { text: "Country", icon: "text" },
];

function Cards() {
  return (
    <div className="flex w-[154px] shrink-0 flex-col gap-1.5 text-[12px] text-[#444]">
      <section className={`h-[62px] px-1.5 pt-[6px] ${cardBox}`}>
        <h2>Pages</h2>
      </section>
      <section className={`h-[78px] px-1.5 pt-[6px] ${cardBox}`}>
        <h2>Filters</h2>
      </section>
      <section className={`h-[333px] px-1.5 pt-[6px] ${cardBox}`}>
        <h2>Marks</h2>
        <div className="relative mt-[11px] flex h-[21px] items-center rounded-[2px] border border-[#c9c9c9]">
          <svg width="14" height="9" viewBox="0 0 14 9" fill="#666" aria-hidden="true" className="pointer-events-none absolute left-2.5">
            <path d="M0 0.500L4 0L5.500 1L4 2.500L3 4L4 5.500L3.500 8.500L2.500 7L2 4L0.500 2.500ZM6.500 1L9 0L13.500 0.500L12.500 2.500L11.500 4.500L10 3.500L9 7L7.500 8L7.500 5L6.300 4L7 2.500ZM11.500 6L13 6.500L12 7.500Z" />
          </svg>
          <select aria-label="Mark type" className="h-full w-full appearance-none bg-transparent pl-[29px] text-[12px] text-[#444] outline-none">
            <option>Map</option>
          </select>
          <span className="pointer-events-none absolute right-0 flex h-full w-[18px] items-center justify-center border-l border-[#d9d9d9]">
            <Caret w={7} />
          </span>
        </div>
        <div className="mt-1.5 grid grid-cols-3 gap-1.5 text-[#222]">
          {markButtons.map((b) => (
            <button key={b.label} type="button" className="flex h-[42px] flex-col items-center border border-[#d4d4d4] bg-[#fafafa] text-[12px] leading-[14px]">
              <span className="flex h-[26px] items-center">{b.icon}</span>
              {b.label}
            </button>
          ))}
        </div>
        <ul className="mt-[9px] flex flex-col gap-[3px] pr-1">
          {pills.map((p, i) => (
            <li key={i} className="flex h-5 items-center">
              <span className="flex w-[25px] shrink-0 justify-center">
                {p.icon === "color" && <ColorDots />}
                {p.icon === "detail" && <Detail />}
                {p.icon === "text" && <TextIcon size={13} />}
              </span>
              <button
                type="button"
                className={`h-5 min-w-0 flex-1 rounded-full pl-2.5 text-left text-[12px] leading-5 font-medium whitespace-nowrap text-white ${p.green ? "bg-[#00b180]" : "bg-[#4996b2]"}`}
              >
                {p.text}
              </button>
            </li>
          ))}
        </ul>
      </section>
    </div>
  );
}

function Shelf({ name, field, vertical = false }: { name: string; field: string; vertical?: boolean }) {
  return (
    <div className={`flex h-7 items-center ${cardBox}`}>
      <div className="flex h-full w-[125px] shrink-0 items-center border-r border-[#d4d4d4] pl-1.5 text-[12px] text-[#444]">
        <span className="w-[19px]">
          {vertical ? (
            <Ico w={11} h={13} c="#555" sw={2}>
              <path d="M1.500 4V13M5.500 4V13M9.500 4V13" />
              <path d="M1.500 0V2M5.500 0V2M9.500 0V2" />
            </Ico>
          ) : (
            <Ico w={12} h={10} c="#555">
              <path d="M0 1H2M0 5H2M0 9H2" strokeWidth="2" />
              <path d="M4 1H12M4 5H12M4 9H12" strokeWidth="1.600" />
            </Ico>
          )}
        </span>
        {name}
      </div>
      <button type="button" className="ml-[2px] h-5 w-[148px] rounded-full bg-[#00b180] pl-2.5 text-left text-[12px] leading-5 font-medium text-white">
        {field}
      </button>
    </div>
  );
}

function MapView() {
  return (
    <section className="flex min-w-0 flex-1 flex-col border border-[#b3b3b3] bg-[#dfece9] px-1.5 pb-1.5">
      <h2 className={`h-[44px] pl-[96px] text-[21px] leading-[50px] font-normal text-[#333] italic ${SYS}`}>Country wise channel</h2>
      <div className="relative min-h-0 flex-1">
        <WorldMap />
        <div className="absolute top-[9px] left-[9px] flex flex-col gap-[9px]">
          <button type="button" aria-label="Search map" className="flex h-7 w-7 items-center justify-center border border-[#b5b5b5] bg-[#f5f5f5]/90">
            <Magnifier s={14} />
          </button>
          <div className="flex w-7 flex-col items-center border border-[#b5b5b5] bg-[#f5f5f5]/80">
            <button type="button" aria-label="Zoom in" className="flex h-[25px] w-full items-center justify-center">
              <Ico w={10} h={10} c="#555" sw={2}>
                <path d="M0 5H10M5 0V10" />
              </Ico>
            </button>
            <button type="button" aria-label="Zoom out" className="flex h-[25px] w-full items-center justify-center">
              <Ico w={10} h={10} c="#555" sw={2}>
                <path d="M0 5H10" />
              </Ico>
            </button>
            <button type="button" aria-label="Fix map" className="flex h-[28px] w-full items-center justify-center border-b border-[#dadada]">
              <Pin s={16} />
            </button>
            <button type="button" aria-label="Map tools" className="flex h-[30px] w-full items-center justify-center">
              <svg width="7" height="9" viewBox="0 0 7 9" aria-hidden="true">
                <path d="M0 0L7 4.500L0 9Z" fill="#555" />
              </svg>
            </button>
          </div>
        </div>
        <p className="absolute bottom-[2px] left-[2px] bg-white/70 px-[3px] font-['Liberation_Sans',sans-serif] text-[11px] leading-[14px] font-normal text-[#555]">
          © 2023 Mapbox © OpenStreetMap
        </p>
      </div>
    </section>
  );
}

const legend: [string, string][] = [
  ["Argentina", "bg-[#6a8db5]"],
  ["As of March 14, 2023..", "bg-[#a9cbe8]"],
  ["Belarus", "bg-[#f0994a]"],
  ["Brazil", "bg-[#fac48e]"],
  ["Canada", "bg-[#77ae6f]"],
  ["Chile", "bg-[#94cf89]"],
  ["Cyprus[a]", "bg-[#bda44f]"],
  ["El Salvador", "bg-[#edcf76]"],
  ["India", "bg-[#66a5a2]"],
  ["Mexico", "bg-[#98c3bf]"],
  ["Romania", "bg-[#e36a6b]"],
  ["Russia", "bg-[#f9a9a9]"],
  ["South Korea", "bg-[#8b8581]"],
  ["Sweden", "bg-[#c4b9b6]"],
  ["Ukraine", "bg-[#d785a6]"],
  ["United Kingdom", "bg-[#f4c8d8]"],
  ["United States", "bg-[#b98eae]"],
  ["United States ( Puer..", "bg-[#d6b2ce]"],
];

function Legend() {
  return (
    <section className="w-[154px] shrink-0 self-start border border-[#d0d4d3] bg-[#dfece9]">
      <h2 className="h-[30px] bg-[#fafafa] pl-1.5 text-[12px] leading-[30px] text-[#444]">Country</h2>
      <ul className={`text-[12px] font-medium text-[#111] ${SYS}`}>
        {legend.map(([name, bg]) => (
          <li key={name} className="flex h-5 items-center gap-[5px] pl-1 leading-5 whitespace-nowrap">
            <span className={`h-[13px] w-[13px] shrink-0 border border-[#6a6a6a] ${bg}`} />
            {name}
          </li>
        ))}
      </ul>
    </section>
  );
}

const sheets: { name: string; w: string; kind?: "dash" | "story" | "data" }[] = [
  { name: "Data Source", w: "w-[131px]", kind: "data" },
  { name: "Sheet 1", w: "w-[58px]" },
  { name: "Sheet 2", w: "w-[57px]" },
  { name: "sheet 3", w: "w-[58px]" },
  { name: "sheet 4", w: "w-[56px]" },
  { name: "Sheet 5", w: "w-[57px]" },
  { name: "Dashboard 1", w: "w-[102px]", kind: "dash" },
  { name: "Story 1", w: "w-[71px]", kind: "story" },
  { name: "Sheet 6", w: "w-[57px]" },
  { name: "Sheet 7", w: "w-[56px]" },
  { name: "Sheet 8", w: "w-[57px]" },
  { name: "Sheet 9", w: "w-[57px]" },
  { name: "Dashboard 2", w: "w-[104px]", kind: "dash" },
];

function SheetTabs() {
  return (
    <div className="flex h-[31px] shrink-0 border-y border-[#cdcdcd] bg-[#e6e6e6] text-[12px] text-[#555]">
      {sheets.map((s) => {
        const active = s.name === "Sheet 6";
        return (
          <button
            key={s.name}
            type="button"
            className={`flex shrink-0 items-center gap-px border-r border-[#cdcdcd] whitespace-nowrap ${s.w} ${s.kind === "data" ? "pl-[9px]" : "justify-center"} ${active ? "bg-white pb-[2px] font-semibold text-[#444]" : ""}`}
          >
            {s.kind === "data" && (
              <Ico w={13} h={13}>
                <ellipse cx="4.500" cy="3" rx="3.500" ry="1.500" />
                <path d="M1 3V10.500C1 12.500 8 12.500 8 10.500V3" />
              </Ico>
            )}
            {s.kind === "dash" && <DashIcon />}
            {s.kind === "story" && <StoryIcon />}
            {s.name}
          </button>
        );
      })}
      <button type="button" aria-label="New worksheet" className="flex w-[33px] items-center justify-center border-r border-[#cdcdcd]">
        <Ico w={16} h={16}>
          <path d="M8.500 13.500H1.500V1.500H12.500V8.500M4.500 8V11M7 5V11M9.500 7V9" />
          <path d="M9 12.500H16M12.500 9V16" stroke="#444" strokeWidth="2" />
        </Ico>
      </button>
      <button type="button" aria-label="New dashboard" className="flex w-8 items-center justify-center border-r border-[#cdcdcd]">
        <DashIcon plus />
      </button>
      <button type="button" aria-label="New story" className="flex w-8 items-center justify-center border-r border-[#cdcdcd]">
        <StoryIcon plus />
      </button>
    </div>
  );
}

function StatusBar() {
  return (
    <footer className="flex h-[18px] shrink-0 items-center bg-[#eaeaea] pl-[3px] text-[11px] text-[#111]">
      <span>15 marks</span>
      <span className="ml-[17px]">1 row by 1 column</span>
      <span className="ml-4">SUM of CNT(Channel): 51</span>
      <span className="flex-1" />
      <span className="h-full w-[127px] border-l border-[#cdcdcd]" />
      <span className="h-full w-[27px] border-l border-[#cdcdcd]" />
      <span className="h-full w-[27px] border-l border-[#cdcdcd]" />
      <span className="h-full w-[47px] border-l border-[#cdcdcd]" />
      <div className="flex h-full w-[71px] items-center justify-around border-l border-[#cdcdcd] px-[3px]">
        {["M1 0V7M7 0L3 3.500L7 7Z", "M5.500 0L1.500 3.500L5.500 7Z", "M2.500 0L6.500 3.500L2.500 7Z", "M7 0V7M1 0L5 3.500L1 7Z"].map((d, i) => (
          <button key={d} type="button" aria-label={["First sheet", "Previous sheet", "Next sheet", "Last sheet"][i]}>
            <svg width="8" height="7" viewBox="0 0 8 7" fill="#b5b5b5" stroke="#b5b5b5" strokeWidth="0.800" aria-hidden="true">
              <path d={d} />
            </svg>
          </button>
        ))}
      </div>
      <div className="flex h-full w-[68px] items-center justify-between border-l border-[#cdcdcd] pr-1.5 pl-2">
        <button type="button" aria-label="Sheet sorter">
          <svg width="11" height="11" viewBox="0 0 11 11" fill="#b5b5b5" aria-hidden="true">
            <path d="M0 0H3V3H0ZM4 0H7V3H4ZM8 0H11V3H8ZM0 4H3V7H0ZM4 4H7V7H4ZM8 4H11V7H8ZM0 8H3V11H0ZM4 8H7V11H4ZM8 8H11V11H8Z" />
          </svg>
        </button>
        <button type="button" aria-label="Filmstrip">
          <svg width="11" height="11" viewBox="0 0 11 11" fill="#b5b5b5" aria-hidden="true">
            <path d="M0 0H11V7H0ZM0 8H3V11H0ZM4 8H7V11H4ZM8 8H11V11H8Z" />
          </svg>
        </button>
        <button type="button" aria-label="Show tabs" className="h-[11px] w-[11px] rounded-[1px] bg-[#666]" />
      </div>
    </footer>
  );
}

export default function App() {
  return (
    <div className={`flex h-screen min-h-[720px] flex-col bg-[#f4f4f4] font-light ${UI}`}>
      <BrowserBar />
      <TitleBar />
      <MenuBar />
      <Toolbar />
      <main className="flex min-h-0 flex-1 gap-1.5 pr-1.5">
        <DataPane />
        <Cards />
        <div className="flex min-w-0 flex-1 flex-col gap-1.5 pb-1.5">
          <Shelf name="Columns" field="Longitude (generated)" vertical />
          <Shelf name="Rows" field="Latitude (generated)" />
          <div className="flex min-h-0 flex-1 gap-1.5">
            <MapView />
            <Legend />
          </div>
        </div>
      </main>
      <SheetTabs />
      <StatusBar />
      <div className="flex h-[2px] shrink-0 bg-[#333538]">
        <span className="ml-12 w-[344px] bg-[#bdbdbd]" />
      </div>
    </div>
  );
}
